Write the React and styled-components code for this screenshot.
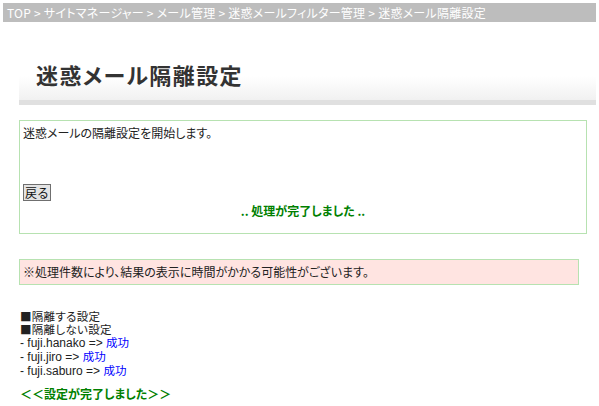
import React from "react";
import styled, { createGlobalStyle } from "styled-components";

const Global = createGlobalStyle`
  html, body { margin: 0; padding: 0; background: #fff; }
  body {
    font-family: "Noto Sans CJK JP", "Liberation Sans", sans-serif;
    font-size: 12px;
    color: #222;
    font-feature-settings: "palt";
  }
`;

const Page = styled.div`
  padding: 3px 3px 0 3px;
  width: 593px;
`;

const Breadcrumb = styled.div`
  background: #bdbdbd;
  color: #fff;
  height: 19px;
  line-height: 19px;
  padding-left: 4px;
  font-size: 12px;
  letter-spacing: 0.25px;
  white-space: nowrap;
`;

const Content = styled.div`
  margin-left: 16px;
`;

const Header = styled.div`
  margin-top: 8px;
  height: 75px;
  box-sizing: border-box;
  padding: 30px 0 0 17px;
  background: linear-gradient(#fff 0%, #fff 66%, #f1f1f1 100%);
  border-bottom: 5px solid #e0e0e0;
`;

const Title = styled.h1`
  margin: 0;
  font-size: 22px;
  line-height: 28px;
  font-weight: bold;
  color: #333;
  letter-spacing: 1.4px;
`;

const Panel = styled.div`
  margin-top: 15px;
  width: 568px;
  box-sizing: border-box;
  border: 1px solid #b7e2b1;
  padding: 4px 3px 15px;
`;

const Line = styled.div`
  line-height: 15px;
`;

const BackButton = styled.button`
  margin-top: 44px;
  display: block;
  height: 17px;
  padding: 0 1px;
  font-family: inherit;
  font-size: 12px;
  line-height: 13px;
  background: #e4e4e4;
  color: #111;
  border: 1px solid #6f6f6f;
  border-radius: 0;
`;

const Done = styled.div`
  text-align: center;
  color: #008000;
  font-weight: bold;
  line-height: 15px;
  margin-top: 2px;
`;

const Notice = styled.div`
  margin-top: 25px;
  width: 560px;
  box-sizing: border-box;
  background: #ffe4e1;
  border: 1px solid #b7e2b1;
  line-height: 24px;
  padding: 0 3px;
`;

const Results = styled.div`
  margin-top: 25px;
  padding-left: 1px;
`;

const ResultLine = styled.div`
  line-height: 13px;
  font-family: "Liberation Sans", "Noto Sans CJK JP", sans-serif;
  font-size: 12px;
`;

const HeadingLine = styled.div`
  line-height: 13px;
  font-size: 11.5px;
  letter-spacing: 0.3px;
`;

const Success = styled.span`
  color: #0000ff;
  font-family: "Noto Sans CJK JP", sans-serif;
  font-size: 11.5px;
`;

const Complete = styled.div`
  margin-top: 8px;
  color: #008000;
  font-weight: bold;
  line-height: 15px;
`;

const users = ["fuji.hanako", "fuji.jiro", "fuji.saburo"];

export default function App() {
  return (
    <>
      <Global />
      <Page>
        <Breadcrumb>
          TOP &gt; サイトマネージャー &gt; メール管理 &gt; 迷惑メールフィルター管理 &gt; 迷惑メール隔離設定
        </Breadcrumb>
        <Content>
          <Header>
            <Title>迷惑メール隔離設定</Title>
          </Header>
          <Panel>
            <Line>迷惑メールの隔離設定を開始します。</Line>
            <BackButton>戻る</BackButton>
            <Done>.. 処理が完了しました ..</Done>
          </Panel>
          <Notice>※処理件数により、結果の表示に時間がかかる可能性がございます。</Notice>
          <Results>
            <HeadingLine>■隔離する設定</HeadingLine>
            <HeadingLine>■隔離しない設定</HeadingLine>
            {users.map((u) => (
              <ResultLine key={u}>
                - {u} =&gt; <Success>成功</Success>
              </ResultLine>
            ))}
            <Complete>＜＜設定が完了しました＞＞</Complete>
          </Results>
        </Content>
      </Page>
    </>
  );
}
